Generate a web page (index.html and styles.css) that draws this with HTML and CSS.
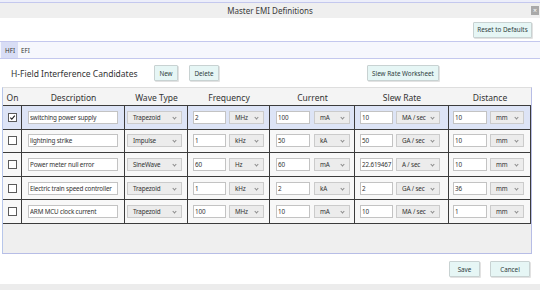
FILE: index.html
```html
<!DOCTYPE html>
<html lang="en">
<head>
    <meta charset="UTF-8">
    <title>Master EMI Definitions</title>
    <link rel="stylesheet" href="styles.css">
</head>
<body>
    <div class="window">
        <div class="top-strip"></div>
        <div class="title-bar">
            <span class="title">Master EMI Definitions</span>
            <span class="close">&times;</span>
        </div>
        <div class="toolbar">
            <button class="btn reset">Reset to Defaults</button>
        </div>
        <div class="tabs">
            <span class="tab active">HFI</span>
            <span class="tab">EFI</span>
        </div>
        <div class="pane">
            <div class="pane-head">
                <span class="pane-title">H-Field Interference Candidates</span>
                <button class="btn new">New</button>
                <button class="btn delete">Delete</button>
                <button class="btn worksheet">Slew Rate Worksheet</button>
            </div>

            <div class="grid">
                <div class="row head">
                    <div class="cell">On</div>
                    <div class="cell">Description</div>
                    <div class="cell">Wave Type</div>
                    <div class="cell">Frequency</div>
                    <div class="cell">Current</div>
                    <div class="cell">Slew Rate</div>
                    <div class="cell">Distance</div>
                </div>

                <div class="row selected">
                    <div class="cell c-on"><span class="check checked"><svg viewBox="0 0 8 8"><path d="M1.5 4.2 L3.2 6 L6.6 1.8" /></svg></span></div>
                    <div class="cell c-desc"><input class="field" value="switching power supply"></div>
                    <div class="cell c-wave"><span class="combo">Trapezoid<i></i></span></div>
                    <div class="cell c-freq"><input class="field" value="2"><span class="combo">MHz<i></i></span></div>
                    <div class="cell c-cur"><input class="field" value="100"><span class="combo">mA<i></i></span></div>
                    <div class="cell c-slew"><input class="field" value="10"><span class="combo">MA / sec<i></i></span></div>
                    <div class="cell c-dist"><input class="field" value="10"><span class="combo">mm<i></i></span></div>
                </div>

                <div class="row">
                    <div class="cell c-on"><span class="check"></span></div>
                    <div class="cell c-desc"><input class="field" value="lightning strike"></div>
                    <div class="cell c-wave"><span class="combo">Impulse<i></i></span></div>
                    <div class="cell c-freq"><input class="field" value="1"><span class="combo">kHz<i></i></span></div>
                    <div class="cell c-cur"><input class="field" value="50"><span class="combo">kA<i></i></span></div>
                    <div class="cell c-slew"><input class="field" value="50"><span class="combo">GA / sec<i></i></span></div>
                    <div class="cell c-dist"><input class="field" value="10"><span class="combo">mm<i></i></span></div>
                </div>

                <div class="row">
                    <div class="cell c-on"><span class="check"></span></div>
                    <div class="cell c-desc"><input class="field" value="Power meter null error"></div>
                    <div class="cell c-wave"><span class="combo">SineWave<i></i></span></div>
                    <div class="cell c-freq"><input class="field" value="60"><span class="combo">Hz<i></i></span></div>
                    <div class="cell c-cur"><input class="field" value="60"><span class="combo">mA<i></i></span></div>
                    <div class="cell c-slew"><input class="field" value="22.619467"><span class="combo">A / sec<i></i></span></div>
                    <div class="cell c-dist"><input class="field" value="10"><span class="combo">mm<i></i></span></div>
                </div>

                <div class="row">
                    <div class="cell c-on"><span class="check"></span></div>
                    <div class="cell c-desc"><input class="field" value="Electric train speed controller"></div>
                    <div class="cell c-wave"><span class="combo">Trapezoid<i></i></span></div>
                    <div class="cell c-freq"><input class="field" value="1"><span class="combo">kHz<i></i></span></div>
                    <div class="cell c-cur"><input class="field" value="2"><span class="combo">kA<i></i></span></div>
                    <div class="cell c-slew"><input class="field" value="2"><span class="combo">GA / sec<i></i></span></div>
                    <div class="cell c-dist"><input class="field" value="36"><span class="combo">mm<i></i></span></div>
                </div>

                <div class="row">
                    <div class="cell c-on"><span class="check"></span></div>
                    <div class="cell c-desc"><input class="field" value="ARM MCU clock current"></div>
                    <div class="cell c-wave"><span class="combo">Trapezoid<i></i></span></div>
                    <div class="cell c-freq"><input class="field" value="100"><span class="combo">MHz<i></i></span></div>
                    <div class="cell c-cur"><input class="field" value="10"><span class="combo">mA<i></i></span></div>
                    <div class="cell c-slew"><input class="field" value="10"><span class="combo">MA / sec<i></i></span></div>
                    <div class="cell c-dist"><input class="field" value="1"><span class="combo">mm<i></i></span></div>
                </div>
            </div>
        </div>
        <div class="footer">
            <button class="btn save">Save</button>
            <button class="btn cancel">Cancel</button>
        </div>
        <div class="bottom-strip"></div>
    </div>
</body>
</html>
```

FILE: styles.css
```css
html,
body {
    margin: 0;
    padding: 0;
    width: 540px;
    height: 290px;
    overflow: hidden;
    background: #ffffff;
    font-family: "Noto Sans", "Open Sans", sans-serif;
    color: #333333;
}

.window {
    display: flex;
    flex-direction: column;
    height: 290px;
}

.top-strip {
    height: 2px;
    background: #eceefa;
    border-bottom: 1px solid #c4c8ee;
}

.title-bar {
    height: 15px;
    background: #efefef;
    display: flex;
    align-items: center;
    justify-content: center;
    position: relative;
}
.title {
    font-size: 8px;
    color: #3a3a3a;
}
.close {
    position: absolute;
    right: 1px;
    top: 3px;
    width: 8px;
    height: 9px;
    background: #a9a9a9;
    color: #ffffff;
    font-size: 7px;
    line-height: 9px;
    text-align: center;
}

.toolbar {
    height: 23px;
    display: flex;
    align-items: center;
    justify-content: flex-end;
    padding-right: 8px;
    border-bottom: 1px solid #c4c8ee;
}

.btn {
    font-family: inherit;
    font-size: 6.3px;
    color: #2f3d3d;
    background: #e6f6f5;
    border: 1px solid #c8d2d2;
    border-radius: 1px;
    box-shadow: 1px 1px 0 #e2e2e2;
    height: 16px;
    padding: 0;
    margin: 0;
}
.reset {
    width: 59px;
}

.tabs {
    height: 16px;
    display: flex;
    align-items: stretch;
    background: #f6f7fd;
    border-bottom: 1px solid #c4c8ee;
    padding-left: 1px;
}
.tab {
    font-size: 6.3px;
    color: #333333;
    display: flex;
    align-items: center;
    padding: 0 3px;
}
.tab.active {
    background: #d8ddf5;
    padding: 0 3px 0 4px;
}

.pane {
    display: flex;
    flex-direction: column;
    padding-left: 2px;
}

.pane-head {
    height: 28px;
    display: flex;
    align-items: center;
}
.pane-title {
    font-size: 8.5px;
    color: #333333;
    margin-left: 9px;
    width: 143px;
}
.new {
    width: 24px;
}
.delete {
    width: 30px;
    margin-left: 11px;
}
.worksheet {
    width: 72px;
    margin-left: 148px;
}

.grid {
    width: 530px;
    height: 167px;
    background: #efefef;
    border-left: 1px solid #b7c6ea;
    border-right: 1px solid #b7bde6;
    border-top: 1px solid #dedede;
    border-bottom: 1px solid #b7bde6;
    box-sizing: border-box;
}

.row {
    display: grid;
    grid-template-columns: 19px 103px 63px 82px 85px 94px 82px;
    height: 23.6px;
    background: #f8f8f8;
}
.row.selected {
    background: #dde4f6;
}
.row.head {
    height: 17px;
    background: #f4f4f4;
    border-bottom: 1px solid #3c3c3c;
}
.row.head .cell {
    justify-content: center;
    font-size: 8.5px;
    border: none;
    padding-top: 1px;
}

.cell {
    display: flex;
    align-items: center;
    gap: 3px;
    border-right: 1px solid #3c3c3c;
    border-bottom: 1px solid #3c3c3c;
    box-sizing: border-box;
}

.field {
    box-sizing: border-box;
    height: 13px;
    width: 34px;
    margin: 0;
    padding: 0 0 0 1px;
    border: 1px solid #c3c3c3;
    background: #ffffff;
    font-family: inherit;
    font-size: 6.3px;
    letter-spacing: -0.15px;
    color: #333333;
    outline: none;
}

.combo {
    box-sizing: border-box;
    height: 13px;
    position: relative;
    display: flex;
    align-items: center;
    padding-left: 5px;
    border: 1px solid #cbcbcb;
    background: #ececec;
    font-size: 6.3px;
    letter-spacing: -0.15px;
    color: #333333;
}
.combo i {
    position: absolute;
    right: 5px;
    top: 4px;
    width: 2px;
    height: 2px;
    border-right: 1px solid #8a8a8a;
    border-bottom: 1px solid #8a8a8a;
    transform: rotate(45deg);
}

.c-on {
    justify-content: center;
    padding-left: 1px;
}
.check {
    width: 7px;
    height: 7px;
    border: 1px solid #5a5a5a;
    background: #ffffff;
    display: block;
}
.check svg {
    width: 7px;
    height: 7px;
    display: block;
}
.check path {
    fill: none;
    stroke: #1a1a1a;
    stroke-width: 1.3;
}

.c-desc {
    padding-left: 6px;
}
.c-desc .field {
    width: 90px;
}

.c-wave {
    padding-left: 2px;
}
.c-wave .combo {
    width: 55px;
}

.c-freq {
    padding-left: 5px;
}
.c-freq .field {
    width: 33px;
}
.c-freq .combo {
    width: 35px;
}

.c-cur {
    padding-left: 6px;
    gap: 4px;
}
.c-cur .combo {
    width: 36px;
}

.c-slew {
    padding-left: 5px;
}
.c-slew .field {
    width: 33px;
}
.c-slew .combo {
    width: 44px;
}

.c-dist {
    padding-left: 4px;
}
.c-dist .combo {
    width: 34px;
}

.footer {
    height: 30px;
    display: flex;
    align-items: center;
    justify-content: flex-end;
    gap: 10px;
    padding-right: 10px;
}
.save {
    width: 31px;
}
.cancel {
    width: 40px;
}

.bottom-strip {
    flex: 1;
    background: #ececec;
}
```
